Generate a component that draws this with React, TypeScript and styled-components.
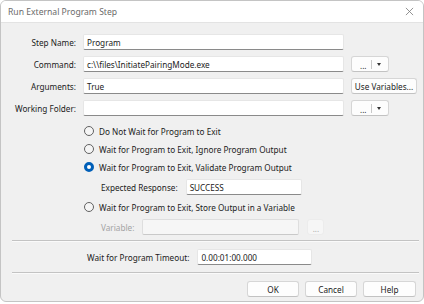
import React from 'react';
import styled, { createGlobalStyle } from 'styled-components';

const GlobalStyle = createGlobalStyle`
    html, body {
        margin: 0;
        padding: 0;
        background: #ffffff;
    }
    body {
        font-family: "Noto Sans", "Open Sans", sans-serif;
        font-size: 8.2px;
        color: #1b1b1b;
    }
`;

const Window = styled.div`
    width: 424px;
    height: 302px;
    border: 1px solid #c4c4c4;
    border-radius: 6px;
    overflow: hidden;
    display: flex;
    flex-direction: column;
    background: #f0f0f0;
    box-sizing: border-box;
`;

const TitleBar = styled.div`
    height: 22px;
    flex: none;
    background: #ffffff;
    border-bottom: 1px solid #e3e3e3;
    display: flex;
    align-items: center;
    justify-content: space-between;
    padding: 0 7px;
    color: #6a6a6a;
    box-sizing: border-box;
`;

const Title = styled.span`
    font-size: 8.6px;
`;

const CloseIcon = styled.svg`
    width: 9px;
    height: 9px;
    margin-right: 2px;
`;

const Body = styled.div`
    flex: 1;
    display: flex;
    flex-direction: column;
    padding-top: 11px;
`;

const FieldGrid = styled.div`
    display: grid;
    grid-template-columns: 75px 261px auto;
    column-gap: 7px;
    row-gap: 6px;
    align-items: center;
`;

const Label = styled.label<{ $disabled?: boolean }>`
    text-align: right;
    white-space: nowrap;
    color: ${p => (p.$disabled ? '#a3a3a3' : '#1b1b1b')};
`;

const TextBox = styled.div<{ $width?: number; $disabled?: boolean }>`
    height: 16px;
    box-sizing: border-box;
    width: ${p => (p.$width ? `${p.$width}px` : '100%')};
    background: ${p => (p.$disabled ? '#f6f6f6' : '#ffffff')};
    border: 1px solid ${p => (p.$disabled ? '#dedede' : '#e6e6e6')};
    border-bottom-color: ${p => (p.$disabled ? '#c9c9c9' : '#8a8a8a')};
    border-radius: 2px;
    padding: 0 3px;
    display: flex;
    align-items: center;
    white-space: nowrap;
    overflow: hidden;
    color: #1b1b1b;
`;

const Button = styled.div<{ $width?: number; $disabled?: boolean }>`
    height: 16px;
    box-sizing: border-box;
    width: ${p => (p.$width ? `${p.$width}px` : 'auto')};
    justify-self: start;
    padding: 0 4px;
    background: ${p => (p.$disabled ? '#f6f6f6' : '#fdfdfd')};
    border: 1px solid ${p => (p.$disabled ? '#ececec' : '#d6d6d6')};
    border-bottom-color: ${p => (p.$disabled ? '#ececec' : '#c2c2c2')};
    border-radius: 3px;
    display: flex;
    align-items: center;
    justify-content: center;
    white-space: nowrap;
    color: ${p => (p.$disabled ? '#a8a8a8' : '#1b1b1b')};
`;

const SplitButton = styled(Button)`
    justify-content: space-between;
    padding: 0 7px 0 8px;
`;

const Dots = styled.span`
    position: relative;
    top: 1px;
    font-size: 8px;
`;

const SplitBar = styled.span`
    width: 1px;
    height: 9px;
    background: #c8c8c8;
`;

const Caret = styled.span`
    width: 0;
    height: 0;
    border-left: 2.5px solid transparent;
    border-right: 2.5px solid transparent;
    border-top: 3px solid #333;
`;

const Options = styled.div`
    display: flex;
    flex-direction: column;
    padding-left: 83px;
    margin-top: 6px;
`;

const RadioRow = styled.div`
    height: 18px;
    display: flex;
    align-items: center;
    gap: 5px;
`;

const RadioDot = styled.span<{ $checked?: boolean }>`
    width: 10px;
    height: 10px;
    box-sizing: border-box;
    border-radius: 50%;
    flex: none;
    border: ${p => (p.$checked ? '3px solid #005fb8' : '1px solid #616161')};
    background: ${p => (p.$checked ? '#ffffff' : '#f5f5f5')};
`;

const SubRow = styled.div`
    display: flex;
    align-items: center;
    gap: 8px;
    padding-left: 17px;
    height: 22px;
`;

const Separator = styled.div<{ $top?: number }>`
    margin: ${p => p.$top ?? 0}px 4px 0 11px;
    border-top: 1px solid #c3c3c3;
    border-bottom: 1px solid #fafafa;
`;

const TimeoutRow = styled.div`
    display: flex;
    align-items: center;
    gap: 8px;
    padding-left: 86px;
    height: 30px;
`;

const Footer = styled.div`
    display: flex;
    justify-content: flex-end;
    gap: 6px;
    padding: 7px 7px 0 0;
`;

const RadioOption: React.FC<{ text: string; checked?: boolean }> = ({ text, checked }) => (
  <RadioRow>
    <RadioDot $checked={checked} />
    <span>{text}</span>
  </RadioRow>
);

const BrowseButton: React.FC = () => (
  <SplitButton $width={38}>
    <Dots>...</Dots>
    <SplitBar />
    <Caret />
  </SplitButton>
);

const App: React.FC = () => {
  return (
    <>
      <GlobalStyle />
      <Window>
        <TitleBar>
          <Title>Run External Program Step</Title>
          <CloseIcon viewBox="0 0 10 10">
            <path d="M1 1 L9 9 M9 1 L1 9" stroke="#7a7a7a" strokeWidth="0.9" fill="none" />
          </CloseIcon>
        </TitleBar>
        <Body>
          <FieldGrid>
            <Label>Step Name:</Label>
            <TextBox>Program</TextBox>
            <span />
            <Label>Command:</Label>
            <TextBox>c:\\files\InitiatePairingMode.exe</TextBox>
            <BrowseButton />
            <Label>Arguments:</Label>
            <TextBox>True</TextBox>
            <Button $width={66}>Use Variables...</Button>
            <Label>Working Folder:</Label>
            <TextBox />
            <BrowseButton />
          </FieldGrid>
          <Options>
            <RadioOption text="Do Not Wait for Program to Exit" />
            <RadioOption text="Wait for Program to Exit, Ignore Program Output" />
            <RadioOption text="Wait for Program to Exit, Validate Program Output" checked />
            <SubRow>
              <Label>Expected Response:</Label>
              <TextBox $width={116}>SUCCESS</TextBox>
            </SubRow>
            <RadioOption text="Wait for Program to Exit, Store Output in a Variable" />
            <SubRow>
              <Label $disabled>Variable:</Label>
              <TextBox $width={157} $disabled />
              <Button $width={17} $disabled><Dots>...</Dots></Button>
            </SubRow>
          </Options>
          <Separator $top={2} />
          <TimeoutRow>
            <Label>Wait for Program Timeout:</Label>
            <TextBox $width={115}>0.00:01:00.000</TextBox>
          </TimeoutRow>
          <Separator />
          <Footer>
            <Button $width={52}>OK</Button>
            <Button $width={52}>Cancel</Button>
            <Button $width={53}>Help</Button>
          </Footer>
        </Body>
      </Window>
    </>
  );
};

export default App;
